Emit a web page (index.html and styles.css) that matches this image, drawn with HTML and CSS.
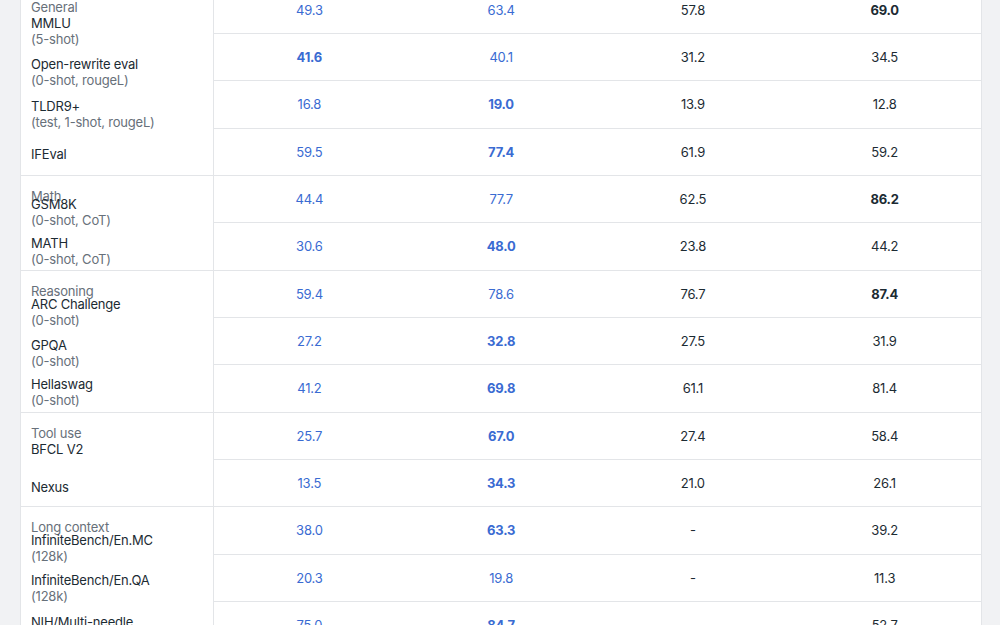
FILE: index.html
```html
<!DOCTYPE html>
<html lang="en">
<head>
<meta charset="utf-8">
<title>Benchmarks</title>
<link rel="stylesheet" href="styles.css">
</head>
<body>
<div class="table">
  <section class="group">
    <div class="label span-4">
      <div class="cat">General</div>
      <div class="bench"><div class="name">MMLU</div><div class="sub">(5-shot)</div></div>
      <div class="bench m9"><div class="name">Open-rewrite eval</div><div class="sub">(0-shot, rougeL)</div></div>
      <div class="bench m10"><div class="name">TLDR9+</div><div class="sub">(test, 1-shot, rougeL)</div></div>
      <div class="bench m16"><div class="name">IFEval</div></div>
    </div>
    <div class="v blue">49.3</div><div class="v blue">63.4</div><div class="v">57.8</div><div class="v b">69.0</div>
    <div class="v blue b">41.6</div><div class="v blue">40.1</div><div class="v">31.2</div><div class="v">34.5</div>
    <div class="v blue">16.8</div><div class="v blue b">19.0</div><div class="v">13.9</div><div class="v">12.8</div>
    <div class="v blue">59.5</div><div class="v blue b">77.4</div><div class="v">61.9</div><div class="v">59.2</div>
  </section>
  <section class="group">
    <div class="label span-2">
      <div class="cat">Math</div>
      <div class="bench mn8"><div class="name">GSM8K</div><div class="sub">(0-shot, CoT)</div></div>
      <div class="bench m7"><div class="name">MATH</div><div class="sub">(0-shot, CoT)</div></div>
    </div>
    <div class="v blue">44.4</div><div class="v blue">77.7</div><div class="v">62.5</div><div class="v b">86.2</div>
    <div class="v blue">30.6</div><div class="v blue b">48.0</div><div class="v">23.8</div><div class="v">44.2</div>
  </section>
  <section class="group">
    <div class="label span-3">
      <div class="cat">Reasoning</div>
      <div class="bench mn3"><div class="name">ARC Challenge</div><div class="sub">(0-shot)</div></div>
      <div class="bench m9"><div class="name">GPQA</div><div class="sub">(0-shot)</div></div>
      <div class="bench m7"><div class="name">Hellaswag</div><div class="sub">(0-shot)</div></div>
    </div>
    <div class="v blue">59.4</div><div class="v blue">78.6</div><div class="v">76.7</div><div class="v b">87.4</div>
    <div class="v blue">27.2</div><div class="v blue b">32.8</div><div class="v">27.5</div><div class="v">31.9</div>
    <div class="v blue">41.2</div><div class="v blue b">69.8</div><div class="v">61.1</div><div class="v">81.4</div>
  </section>
  <section class="group">
    <div class="label span-2">
      <div class="cat">Tool use</div>
      <div class="bench"><div class="name">BFCL V2</div></div>
      <div class="bench m22"><div class="name">Nexus</div></div>
    </div>
    <div class="v blue">25.7</div><div class="v blue b">67.0</div><div class="v">27.4</div><div class="v">58.4</div>
    <div class="v blue">13.5</div><div class="v blue b">34.3</div><div class="v">21.0</div><div class="v">26.1</div>
  </section>
  <section class="group">
    <div class="label span-3">
      <div class="cat">Long context</div>
      <div class="bench mn3"><div class="name">InfiniteBench/En.MC</div><div class="sub">(128k)</div></div>
      <div class="bench m8"><div class="name">InfiniteBench/En.QA</div><div class="sub">(128k)</div></div>
      <div class="bench m10"><div class="name">NIH/Multi-needle</div></div>
    </div>
    <div class="v blue">38.0</div><div class="v blue b">63.3</div><div class="v">-</div><div class="v">39.2</div>
    <div class="v blue">20.3</div><div class="v blue">19.8</div><div class="v">-</div><div class="v">11.3</div>
    <div class="v blue">75.0</div><div class="v blue b">84.7</div><div class="v">-</div><div class="v">52.7</div>
  </section>
</div>
</body>
</html>
```
FILE: styles.css
```css
html, body {
  margin: 0;
  padding: 0;
  background: #f1f2f4;
  overflow: hidden;
  height: 625px;
}

body {
  font-family: Inter, "Noto Sans", "Liberation Sans", sans-serif;
  font-size: 13px;
  line-height: 16px;
  letter-spacing: -0.2px;
  color: #1c2b33;
}

.table {
  width: 962px;
  box-sizing: border-box;
  margin: -13.4px 0 0 20px;
  background: #ffffff;
  border-left: 1px solid #e3e5e8;
  border-right: 1px solid #e3e5e8;
}

.group {
  display: grid;
  grid-template-columns: 193px repeat(4, 1fr);
  grid-auto-rows: 47.333px;
}

.label {
  grid-column: 1;
  box-sizing: border-box;
  border-right: 1px solid #e3e5e8;
  border-bottom: 1px solid #e3e5e8;
  padding: 12px 0 0 10px;
  display: flex;
  flex-direction: column;
  overflow: visible;
}

.span-2 { grid-row: span 2; }
.span-3 { grid-row: span 3; }
.span-4 { grid-row: span 4; }

.cat {
  color: #67707a;
}

.name {
  color: #1c2b33;
}

.sub {
  color: #67707a;
}

.bench { margin-top: 0; }
.m7 { margin-top: 7px; }
.m8 { margin-top: 8px; }
.m9 { margin-top: 9px; }
.m10 { margin-top: 10px; }
.m16 { margin-top: 16px; }
.m22 { margin-top: 22px; }
.mn3 { margin-top: -3px; }
.mn8 { margin-top: -8px; }

.v {
  box-sizing: border-box;
  border-bottom: 1px solid #e3e5e8;
  display: flex;
  align-items: center;
  justify-content: center;
  color: #1c2b33;
  padding-right: 1px;
}

.v.blue {
  color: #3a6bd2;
}

.v.b {
  font-weight: 700;
}
```
